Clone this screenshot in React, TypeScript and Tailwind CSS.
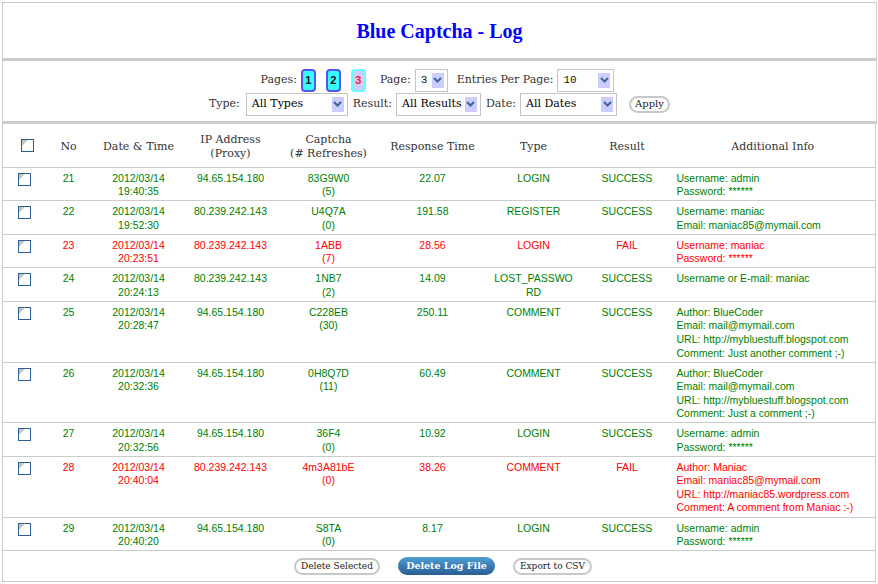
import React from 'react';

type Row = {
  no: number;
  time: string;
  ip: string;
  captcha: string;
  refreshes: number;
  response: string;
  type: string[];
  ok: boolean;
  info: string[];
};

const rows: Row[] = [
  { no: 21, time: '19:40:35', ip: '94.65.154.180', captcha: '83G9W0', refreshes: 5, response: '22.07', type: ['LOGIN'], ok: true, info: ['Username: admin', 'Password: ******'] },
  { no: 22, time: '19:52:30', ip: '80.239.242.143', captcha: 'U4Q7A', refreshes: 0, response: '191.58', type: ['REGISTER'], ok: true, info: ['Username: maniac', 'Email: maniac85@mymail.com'] },
  { no: 23, time: '20:23:51', ip: '80.239.242.143', captcha: '1ABB', refreshes: 7, response: '28.56', type: ['LOGIN'], ok: false, info: ['Username: maniac', 'Password: ******'] },
  { no: 24, time: '20:24:13', ip: '80.239.242.143', captcha: '1NB7', refreshes: 2, response: '14.09', type: ['LOST_PASSWO', 'RD'], ok: true, info: ['Username or E-mail: maniac'] },
  {
    no: 25, time: '20:28:47', ip: '94.65.154.180', captcha: 'C228EB', refreshes: 30, response: '250.11', type: ['COMMENT'], ok: true,
    info: ['Author: BlueCoder', 'Email: mail@mymail.com', 'URL: http://mybluestuff.blogspot.com', 'Comment: Just another comment ;-)'],
  },
  {
    no: 26, time: '20:32:36', ip: '94.65.154.180', captcha: '0H8Q7D', refreshes: 11, response: '60.49', type: ['COMMENT'], ok: true,
    info: ['Author: BlueCoder', 'Email: mail@mymail.com', 'URL: http://mybluestuff.blogspot.com', 'Comment: Just a comment ;-)'],
  },
  { no: 27, time: '20:32:56', ip: '94.65.154.180', captcha: '36F4', refreshes: 0, response: '10.92', type: ['LOGIN'], ok: true, info: ['Username: admin', 'Password: ******'] },
  {
    no: 28, time: '20:40:04', ip: '80.239.242.143', captcha: '4m3A81bE', refreshes: 0, response: '38.26', type: ['COMMENT'], ok: false,
    info: ['Author: Maniac', 'Email: maniac85@mymail.com', 'URL: http://maniac85.wordpress.com', 'Comment: A comment from Maniac :-)'],
  },
  { no: 29, time: '20:40:20', ip: '94.65.154.180', captcha: 'S8TA', refreshes: 0, response: '8.17', type: ['LOGIN'], ok: true, info: ['Username: admin', 'Password: ******'] },
];

const serif = "font-['DejaVu_Serif',serif]";

const Checkbox = () => (
  <svg width="13" height="13" viewBox="0 0 13 13" className="block">
    <rect x="0.5" y="0.5" width="12" height="12" fill="#fff" stroke="#2b5f95" />
    <polygon points="1,1 7,1 1,7" fill="#c4c4c4" />
    <line x1="7" y1="1" x2="1" y2="7" stroke="#f3edc0" />
  </svg>
);

const Select = ({ value, width, mono }: { value: string; width: string; mono?: boolean }) => (
  <div className={`flex items-center justify-between h-[23px] border border-[#c4c4c4] bg-white pl-[5px] pr-[3px] ${width}`}>
    <span className={mono ? "font-['Liberation_Mono',monospace] text-[11px] text-[#111]" : 'text-[11px] text-black'}>{value}</span>
    <span className="flex items-center justify-center w-[12px] h-[15px] bg-[#ccccff]">
      <svg width="9" height="6" viewBox="0 0 9 6">
        <path d="M1 1 L4.5 4.5 L8 1" fill="none" stroke="#3a6796" strokeWidth="2" />
      </svg>
    </span>
  </div>
);

const PageButton = ({ n, current }: { n: number; current?: boolean }) => (
  <span
    className={`flex items-center justify-center w-[15px] h-[23px] rounded-[4px] border-2 font-['Liberation_Sans',sans-serif] text-[11px] font-bold ${
      current ? 'bg-[#ccccff] border-[#66ffff] text-[#ff2020]' : 'bg-[#33ffff] border-[#5555ee] text-[#111]'
    }`}
  >
    {n}
  </span>
);

const PillButton = ({ label }: { label: string }) => (
  <button className="h-[17px] px-[5px] rounded-full border-2 border-[#c8c8c8] bg-white text-[9px] text-[#222] leading-none">
    {label}
  </button>
);

export default function App() {
  return (
    <div className={`w-[878px] h-[584px] bg-white pt-[2px] pl-[2px] pr-[1px] text-[#333] ${serif}`}>
      <div className="h-[56px] border-t border-x border-[#cccccc] flex items-center justify-center">
        <h1 className="font-['Liberation_Serif',serif] font-bold text-[20px] text-[#0000ff]">Blue Captcha - Log</h1>
      </div>
      <div className="h-[3px] bg-[#cccccc]" />

      <div className="h-[60px] border-x border-[#cccccc] pt-[7px] text-[11px]">
        <div className="flex items-center justify-center h-[24px] pr-[4px]">
          <span>Pages:</span>
          <span className="ml-[4px]"><PageButton n={1} /></span>
          <span className="ml-[10px]"><PageButton n={2} /></span>
          <span className="ml-[10px]"><PageButton n={3} current /></span>
          <span className="ml-[14px]">Page:</span>
          <span className="ml-[4px]"><Select value="3" width="w-[33px]" mono /></span>
          <span className="ml-[9px]">Entries Per Page:</span>
          <span className="ml-[4px]"><Select value="10" width="w-[57px]" mono /></span>
        </div>
        <div className="flex items-center justify-center h-[24px]">
          <span>Type:</span>
          <span className="ml-[6px]"><Select value="All Types" width="w-[102px]" /></span>
          <span className="ml-[5px]">Result:</span>
          <span className="ml-[4px]"><Select value="All Results" width="w-[85px]" /></span>
          <span className="ml-[5px]">Date:</span>
          <span className="ml-[4px]"><Select value="All Dates" width="w-[97px]" /></span>
          <button className="ml-[12px] h-[17px] w-[41px] rounded-full border-2 border-[#c8c8c8] bg-white text-[10px] text-[#222] leading-none">
            Apply
          </button>
        </div>
      </div>
      <div className="h-[3px] bg-[#cccccc]" />

      <table className="w-[873px] table-fixed border-collapse border-x border-b border-[#cccccc]">
        <colgroup>
          <col className="w-[43px]" />
          <col className="w-[46px]" />
          <col className="w-[94px]" />
          <col className="w-[90px]" />
          <col className="w-[106px]" />
          <col className="w-[102px]" />
          <col className="w-[100px]" />
          <col className="w-[87px]" />
          <col className="w-[205px]" />
        </colgroup>
        <thead>
          <tr className="h-[43px] text-[11px] leading-[14px] text-[#333]">
            <th className="pl-[6px] pt-[1px]">
              <div className="flex justify-center"><Checkbox /></div>
            </th>
            <th className="font-normal pt-[3px]">No</th>
            <th className="font-normal pt-[3px]">Date &amp; Time</th>
            <th className="font-normal pt-[3px]">IP Address<br />(Proxy)</th>
            <th className="font-normal pt-[3px]">Captcha<br />(# Refreshes)</th>
            <th className="font-normal pt-[3px]">Response Time</th>
            <th className="font-normal pt-[3px]">Type</th>
            <th className="font-normal pt-[3px]">Result</th>
            <th className="font-normal pt-[3px]">Additional Info</th>
          </tr>
        </thead>
        <tbody className="font-['Liberation_Sans',sans-serif] text-[10.5px] leading-[13.55px]">
          {rows.map((r) => {
            const color = r.ok ? 'text-[#008000]' : 'text-[#ff0000]';
            return (
              <tr key={r.no} className={`border-t border-[#cccccc] align-top text-center ${color}`}>
                <td className="pt-[5px] pb-[1.5px]">
                  <div className="flex justify-center"><Checkbox /></div>
                </td>
                <td className="pt-[4px] pb-[1.5px]">{r.no}</td>
                <td className="pt-[4px] pb-[1.5px]">2012/03/14<br />{r.time}</td>
                <td className="pt-[4px] pb-[1.5px]">{r.ip}</td>
                <td className="pt-[4px] pb-[1.5px]">{r.captcha}<br />({r.refreshes})</td>
                <td className="pt-[4px] pb-[1.5px]">{r.response}</td>
                <td className="pt-[4px] pb-[1.5px]">
                  {r.type.map((t, i) => (
                    <div key={i}>{t}</div>
                  ))}
                </td>
                <td className="pt-[4px] pb-[1.5px]">{r.ok ? 'SUCCESS' : 'FAIL'}</td>
                <td className="pt-[4px] pb-[1.5px] pl-[6px] text-left">
                  {r.info.map((line, i) => (
                    <div key={i}>{line}</div>
                  ))}
                </td>
              </tr>
            );
          })}
          <tr className="border-t border-[#cccccc] h-[31px]">
            <td colSpan={9}>
              <div className={`flex items-center justify-center pl-[8px] ${serif}`}>
                <PillButton label="Delete Selected" />
                <button className="ml-[18px] h-[18px] w-[97px] rounded-full bg-[linear-gradient(#4f9fd0,#3a7db4_50%,#2a5e92)] text-white font-bold text-[9.5px] leading-none">
                  Delete Log File
                </button>
                <span className="ml-[18px]"><PillButton label="Export to CSV" /></span>
              </div>
            </td>
          </tr>
        </tbody>
      </table>
    </div>
  );
}
